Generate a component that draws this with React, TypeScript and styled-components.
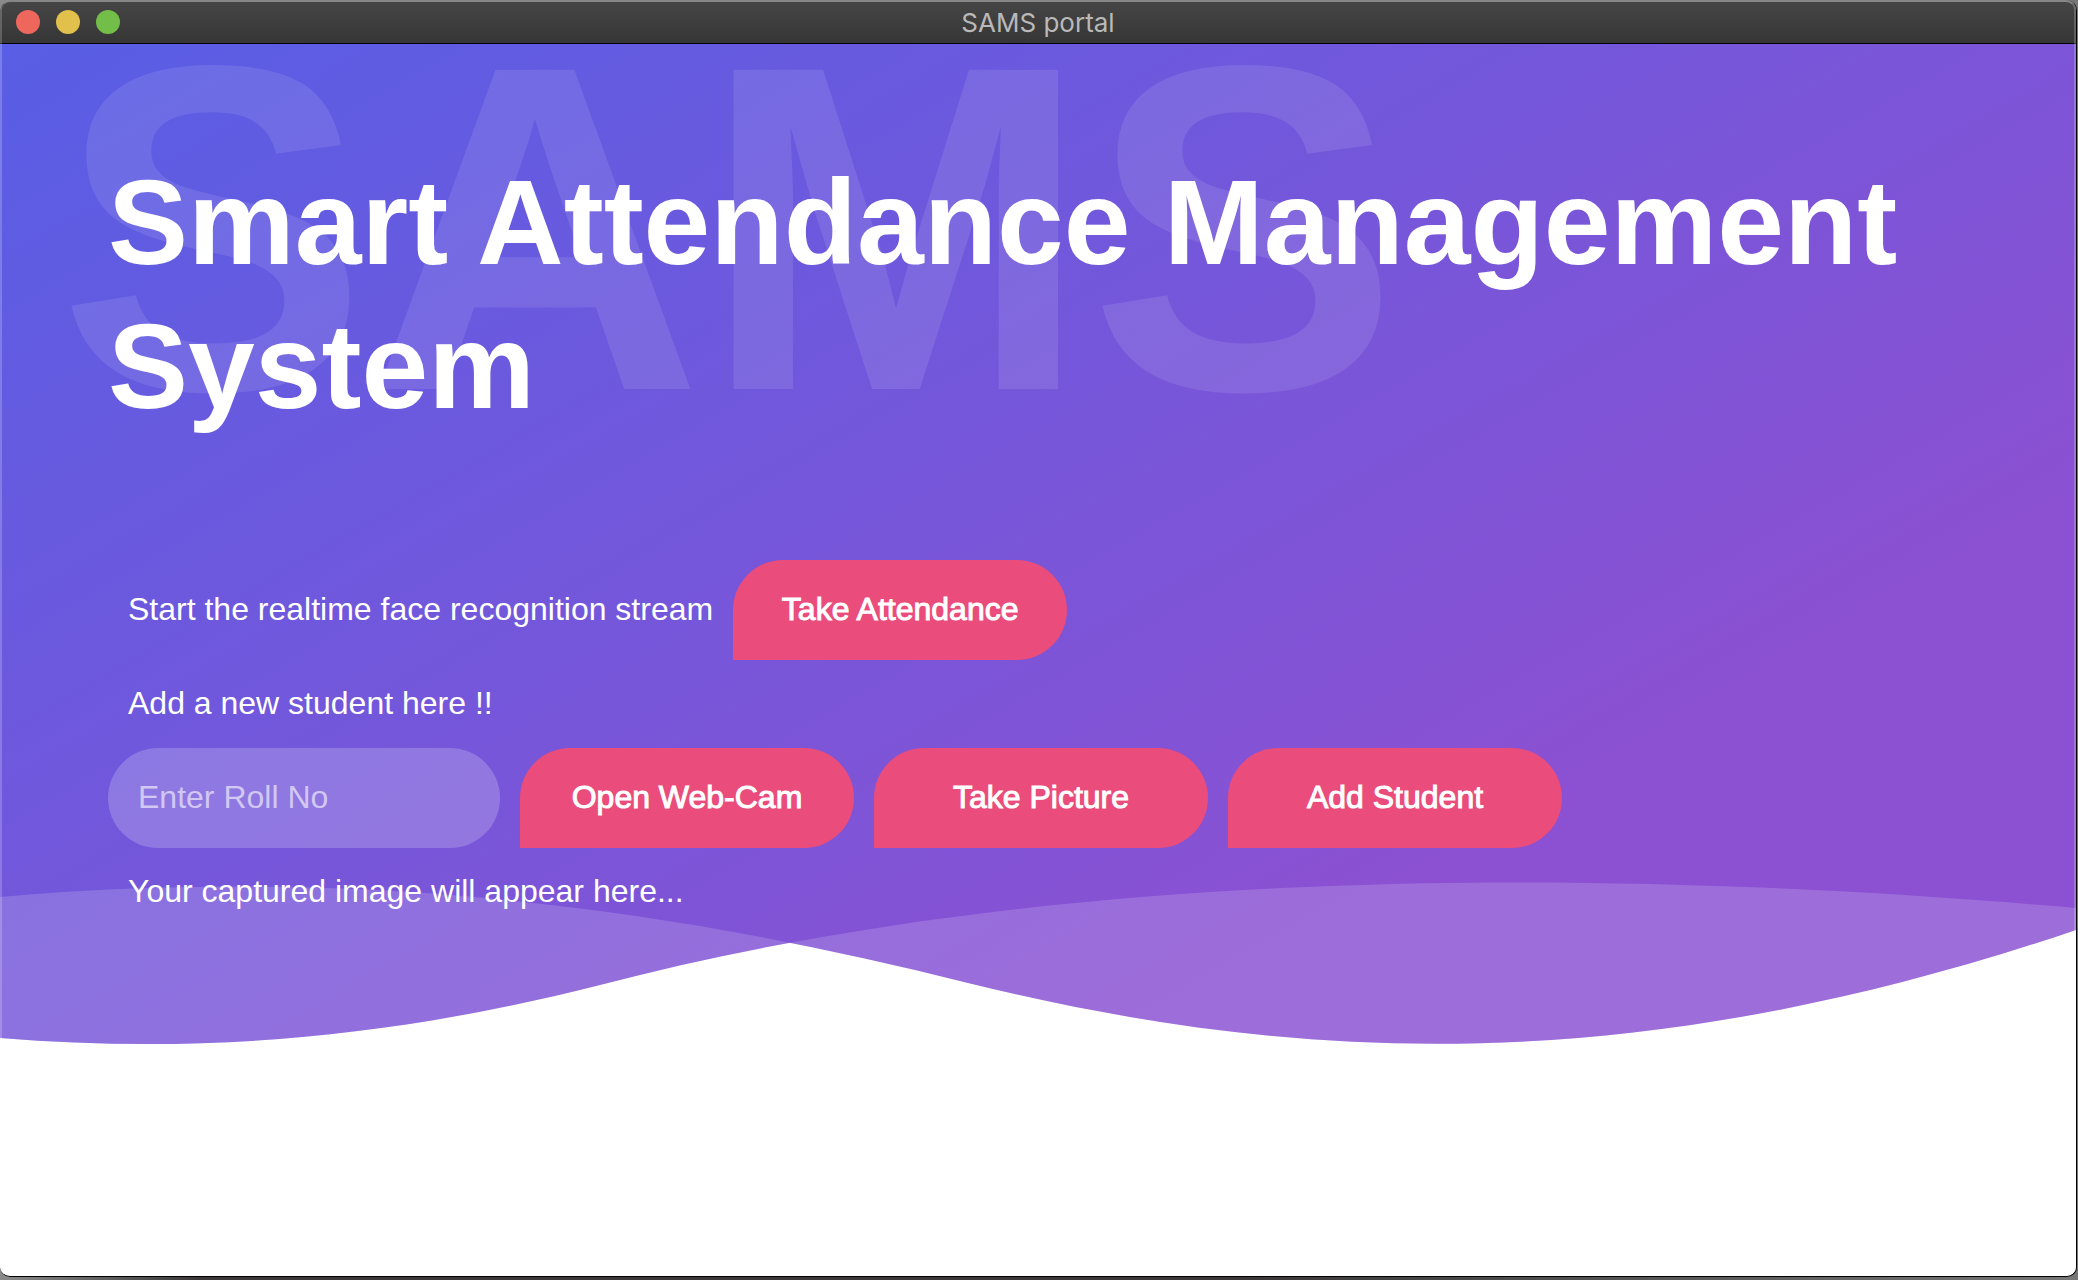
import React from "react";
import styled, { createGlobalStyle } from "styled-components";

const GlobalStyle = createGlobalStyle`
  *, *::before, *::after { box-sizing: border-box; }
  body {
    margin: 0;
    background: linear-gradient(90deg, #8a8a8a 0, #3a3838 200px, #3a3838 60%, #777 100%);
    font-family: "Liberation Sans", Arial, sans-serif;
  }
`;

const Frame = styled.div`
  min-height: 100vh;
  padding: 0 1px 3px 0;
  display: flex;
`;

const Window = styled.div`
  position: relative;
  flex: 1;
  display: flex;
  flex-direction: column;
  overflow: hidden;
  background: #fff;
  border-right: 1px solid #000;
  border-bottom: 1px solid #000;
  border-radius: 10px;

  &::after {
    content: "";
    position: absolute;
    inset: 0;
    border: 2px solid rgba(255, 255, 255, 0.2);
    border-top-color: rgba(255, 255, 255, 0.35);
    border-radius: 10px;
    pointer-events: none;
  }
`;

const TitleBar = styled.header`
  display: grid;
  grid-template-columns: 1fr auto 1fr;
  align-items: center;
  height: 44px;
  padding: 0 16px;
  background: linear-gradient(#464646, #363636);
  border-bottom: 1px solid #000;
`;

const Lights = styled.div`
  display: flex;
  gap: 16px;
`;

const Light = styled.button<{ $color: string }>`
  width: 24px;
  height: 24px;
  padding: 0;
  border: 0;
  border-radius: 50%;
  background: ${(p) => p.$color};
`;

const WindowTitle = styled.span`
  padding-top: 2px;
  font-family: Inter, sans-serif;
  font-size: 26px;
  line-height: 32px;
  color: #b9b9b9;
`;

const Hero = styled.main`
  position: relative;
  padding: 106px 108px 112px;
  background: linear-gradient(150deg, #585ee5 0%, #8b51d2 75%);
  color: #fff;
`;

const Watermark = styled.div`
  position: absolute;
  top: -16px;
  left: 58px;
  font-size: 464px;
  font-weight: 700;
  line-height: 400px;
  color: rgba(255, 255, 255, 0.1);
  pointer-events: none;
`;

const Waves = styled.svg`
  position: absolute;
  left: 0;
  bottom: 0;
  width: 100%;
  height: 196px;
  display: block;
`;

const Content = styled.div`
  position: relative;
`;

const Heading = styled.h1`
  margin: 0 0 122px;
  font-size: 120px;
  font-weight: 700;
  line-height: 144px;
`;

const Row = styled.div`
  display: flex;
  align-items: center;
  gap: 20px;
`;

const Copy = styled.p`
  margin: 0;
  padding: 19px 0 21px 20px;
  font-size: 32px;
  line-height: 48px;
`;

const Action = styled.button`
  width: 334px;
  height: 100px;
  padding: 0 0 2px;
  border: 0;
  border-radius: 50px 50px 50px 0;
  background: #ea4c7c;
  color: #fff;
  font-family: inherit;
  font-size: 32px;
  line-height: 48px;
  -webkit-text-stroke: 1px #fff;
`;

const RollInput = styled.input`
  width: 392px;
  height: 100px;
  padding: 0 30px 2px;
  border: 0;
  border-radius: 50px;
  background: rgba(255, 255, 255, 0.2);
  color: #fff;
  font-family: inherit;
  font-size: 32px;

  &::placeholder {
    color: rgba(255, 255, 255, 0.6);
    opacity: 1;
  }
`;

const RISING =
  "M0 1038 C210 1055 398 1036 600 985 C992 882 1490 857 2076 908 V1048 H0 Z";
const FALLING =
  "M0 897 C330 868 642 900 968 983 C1304 1066 1640 1078 2076 930 V1048 H0 Z";

export default function App() {
  return (
    <>
      <GlobalStyle />
      <Frame>
        <Window>
          <TitleBar>
            <Lights>
              <Light $color="#ee675c" aria-label="Close" />
              <Light $color="#e2c04c" aria-label="Minimize" />
              <Light $color="#73be48" aria-label="Zoom" />
            </Lights>
            <WindowTitle>SAMS portal</WindowTitle>
          </TitleBar>
          <Hero>
            <Watermark aria-hidden="true">SAMS</Watermark>
            <Waves viewBox="0 852 2076 196" preserveAspectRatio="none" aria-hidden="true">
              <defs>
                <clipPath id="rising">
                  <path d={RISING} />
                </clipPath>
              </defs>
              <path
                d={`${RISING} ${FALLING}`}
                fill="#fff"
                fillOpacity="0.16"
                fillRule="evenodd"
              />
              <path d={FALLING} fill="#fff" clipPath="url(#rising)" />
            </Waves>
            <Content>
              <Heading>Smart Attendance Management System</Heading>
              <Row>
                <Copy>Start the realtime face recognition stream</Copy>
                <Action type="button">Take Attendance</Action>
              </Row>
              <Copy>Add a new student here !!</Copy>
              <Row>
                <RollInput type="text" placeholder="Enter Roll No" aria-label="Enter Roll No" />
                <Action type="button">Open Web-Cam</Action>
                <Action type="button">Take Picture</Action>
                <Action type="button">Add Student</Action>
              </Row>
              <Copy>Your captured image will appear here...</Copy>
            </Content>
          </Hero>
        </Window>
      </Frame>
    </>
  );
}
